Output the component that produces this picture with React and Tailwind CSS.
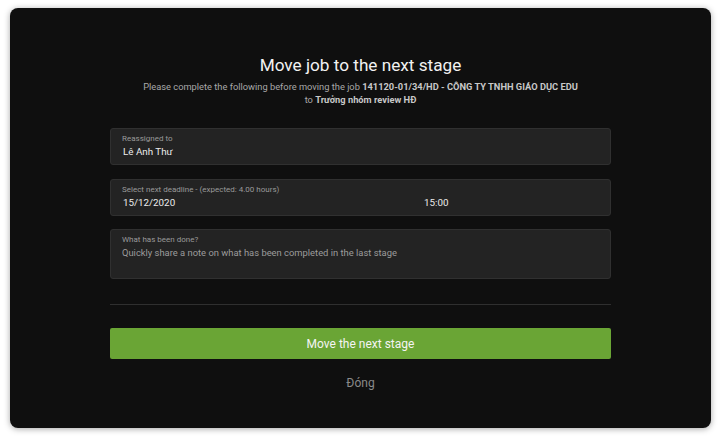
import React from "react";

const Field = ({ label, children, className = "" }) => (
  <div
    className={`rounded-[3px] border border-[#303030] bg-[#232323] px-[11px] pt-[4px] ${className}`}
  >
    <div className="text-[8px] leading-[11px] text-[#9a9a9a]">{label}</div>
    {children}
  </div>
);

export default function App() {
  return (
    <div
      className="min-h-[441px] bg-white pt-[8px] pl-[10px] pr-[10px]"
      style={{ fontFamily: "Roboto, 'Noto Sans', sans-serif" }}
    >
      <div className="flex h-[420px] flex-col rounded-[8px] bg-[#0f0f0f] px-[100px] pt-[46px] shadow-[0_1px_6px_rgba(0,0,0,0.35)]">
        <h1 className="text-center text-[17.2px] font-normal leading-[23px] text-[#f2f2f2]">
          Move job to the next stage
        </h1>
        <p className="mt-[3px] text-center text-[9.3px] leading-[13px] text-[#a8a8a8]">
          Please complete the following before moving the job{" "}
          <span className="font-bold text-[#c8c8c8]">
            141120-01/34/HD - CÔNG TY TNHH GIÁO DỤC EDU
          </span>
          <br />
          to <span className="font-bold text-[#c8c8c8]">Trưởng nhóm review HĐ</span>
        </p>

        <Field label="Reassigned to" className="mt-[22px] h-[37px]">
          <div className="mt-[1px] pl-[1px] text-[9.8px] leading-[13px] text-[#ececec]">
            Lê Anh Thư
          </div>
        </Field>

        <Field
          label="Select next deadline - (expected: 4.00 hours)"
          className="mt-[14px] h-[37px]"
        >
          <div className="mt-[1px] flex pl-[1px] text-[9.8px] leading-[13px] text-[#ececec]">
            <span className="w-[301px]">15/12/2020</span>
            <span>15:00</span>
          </div>
        </Field>

        <Field label="What has been done?" className="mt-[13px] h-[50px]">
          <div className="mt-[1px] text-[9.4px] leading-[13px] text-[#9c9c9c]">
            Quickly share a note on what has been completed in the last stage
          </div>
        </Field>

        <div className="mt-[25px] h-px bg-[#2f2f2f]" />

        <button className="mt-[23px] h-[31px] rounded-[2px] bg-[#6aa535] text-[12px] text-[#f4f4f4]">
          Move the next stage
        </button>

        <div className="mt-[16px] text-center text-[12px] leading-[16px] text-[#8a8a8a]">
          Đóng
        </div>
      </div>
    </div>
  );
}
